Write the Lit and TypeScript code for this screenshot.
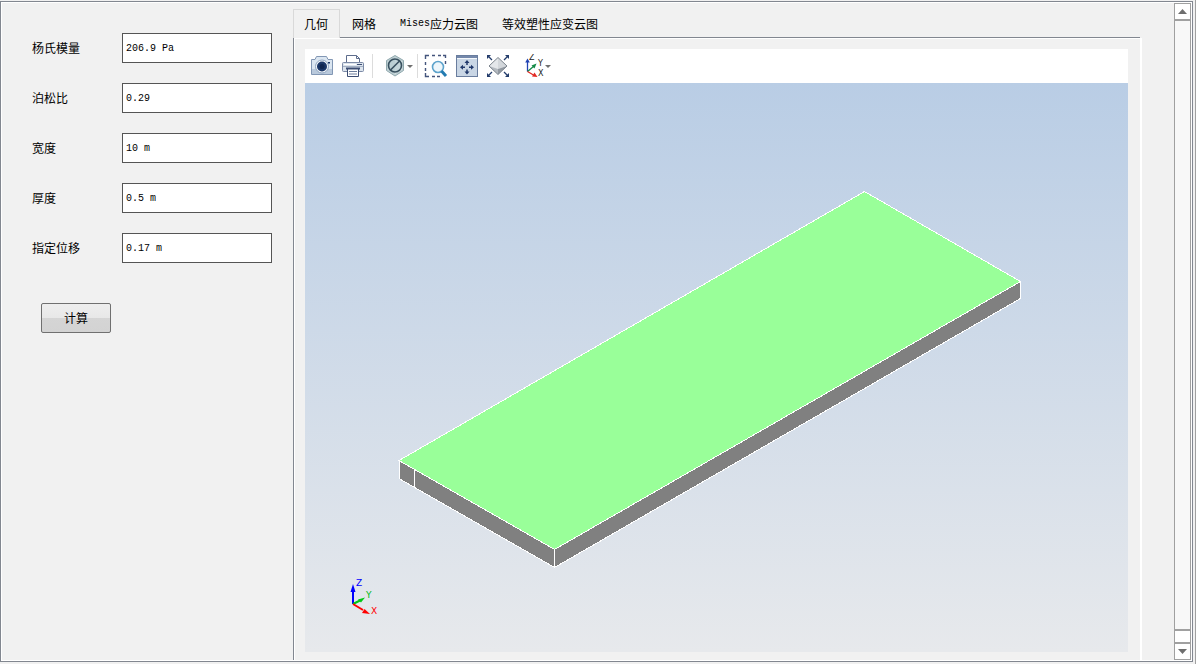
import { LitElement, html, css, svg } from "lit";
import { customElement, state } from "lit/decorators.js";

const FIELDS = [
  { id: "young", label: "杨氏模量", value: "206.9 Pa" },
  { id: "poisson", label: "泊松比", value: "0.29" },
  { id: "width", label: "宽度", value: "10 m" },
  { id: "thickness", label: "厚度", value: "0.5 m" },
  { id: "displacement", label: "指定位移", value: "0.17 m" },
];

const TABS = [
  { latin: "", text: "几何" },
  { latin: "", text: "网格" },
  { latin: "Mises", text: "应力云图" },
  { latin: "", text: "等效塑性应变云图" },
];

const camera = svg`
  <path d="M1.500 5.500h3.500l1.500-3h10l1.500 3h4.500v15h-21z" fill="#dbe6f1" stroke="#8297b4"/>
  <path d="M2 15h20v5H2z" fill="#b9c9dc"/>
  <circle cx="12" cy="12.500" r="6.500" fill="#f3f7fb" stroke="#8fa5c0"/>
  <circle cx="12" cy="12.500" r="5" fill="#1b3768"/>
  <circle cx="12" cy="12.500" r="2.500" fill="#102650"/>
  <path d="M18 8h2v1.500h-2z" fill="#1b3768"/>`;
const printer = svg`
  <path d="M5.500 10V1.500h10l3 3V10" fill="#fff" stroke="#5d6c8c"/>
  <path d="M15.500 1.500v3h3" fill="none" stroke="#5d6c8c"/>
  <rect x="1.500" y="8.500" width="21" height="9" rx="1" fill="#dce4ed" stroke="#7c8aa6"/>
  <path d="M2 12.500h20" stroke="#a3b0c4"/>
  <path d="M3 10.500h12" stroke="#fff"/>
  <path d="M16 10.500h5" stroke="#3b4c72"/>
  <path d="M6.500 14.500h11v8h-11z" fill="#fff" stroke="#3b4c72"/>
  <path d="M5 14.500h14" stroke="#3b4c72" stroke-width="2"/>
  <path d="M8 17.500h8M8 20h8" stroke="#6e7f9e"/>`;
const noClip = svg`
  <path d="M12 1.500l8.500 5v10L12 22l-8.500-5.500v-10z" fill="#bfd0d4" stroke="#90a9ae"/>
  <path d="M12 3.500l7 4v8L12 20z" fill="#d9e4e6"/>
  <circle cx="12" cy="11.500" r="6.500" fill="#b9cfd3" fill-opacity="0.700" stroke="#38505f" stroke-width="1.600"/>
  <path d="M7.500 16l9-9" stroke="#38505f" stroke-width="1.600"/>`;
const zoomBox = svg`
  <path d="M1.500 5V1.500H5M8 1.500h3M14 1.500h3M19 1.500h2.500V4M1.500 8v3M1.500 14v3M1.500 19v3.500H5M8 22.500h3M13 22.500h3M21.500 7v3" fill="none" stroke="#43547c" stroke-width="1.400"/>
  <circle cx="14" cy="13" r="5.500" fill="#edf6fb" stroke="#5da3cc" stroke-width="1.600"/>
  <path d="M17.500 17l4.500 5" stroke="#237bb1" stroke-width="3"/>`;
const extents = svg`
  <rect x="1.500" y="1.500" width="21" height="21" fill="#c9d6e5" stroke="#697d9e"/>
  <path d="M2 2h20v2H2z" fill="#7488ab"/>
  <path d="M2 4.500h20" stroke="#f3f7fb"/>
  <path d="M12 6l2.500 3h-5zM12 20.500l2.500-3h-5zM5 13.200l3-2.500v5zM19 13.200l-3-2.500v5z" fill="#20386b"/>
  <path d="M12 8v3M12 15.500V18M7 13.200h3M14 13.200h3" stroke="#20386b" stroke-width="1.500"/>`;
const fitView = svg`
  <path d="M12 3.500L21 12l-9 8.500L3 12z" fill="#e4e7ea"/>
  <path d="M12 3.500L21 12l-9 3z" fill="#d3d7db"/>
  <path d="M21 12l-9 8.500V15z" fill="#9299a1"/>
  <path d="M3 12l9 8.500V15z" fill="#b4bac0"/>
  <path d="M12 3.500L21 12l-9 8.500L3 12z" fill="none" stroke="#7d858e"/>
  <path d="M1 1h4L1 5zM23 1h-4l4 4zM1 23h4l-4-4zM23 23h-4l4-4z" fill="#233c6b"/>
  <path d="M2 2l4 4M22 2l-4 4M2 22l4-4M22 22l-4-4" stroke="#233c6b" stroke-width="1.300"/>`;
const axes = svg`
  <path d="M3.500 17.500V7" stroke="#2143b3" stroke-width="1.300"/>
  <path d="M3.500 4.500l2.300 4H1.200z" fill="#2143b3"/>
  <path d="M3.500 17.500l6-5" stroke="#148a45" stroke-width="1.300"/>
  <path d="M12.500 9.500l-2 5-3-3z" fill="#148a45"/>
  <path d="M3.500 17.500l6 3.500" stroke="#e32822" stroke-width="1.300"/>
  <path d="M13.500 23l-5.500-.5 2.500-4z" fill="#e32822"/>
  <text x="5" y="6" class="axis">Z</text>
  <text x="14" y="12" class="axis">Y</text>
  <text x="14" y="22" class="axis">X</text>`;

@customElement("app-root")
export class AppRoot extends LitElement {
  @state() private active = 0;

  static styles = css`
    :host {
      display: block;
      box-sizing: border-box;
      height: 100vh;
      padding: 1px 1px 2px 0;
      border-right: 1px solid #a0a0a0;
      background: #f1f1f1;
      color: #000;
      font: 12px/16px "Noto Sans CJK SC", sans-serif;
    }
    * {
      box-sizing: border-box;
    }
    .frame {
      display: flex;
      height: 100%;
      margin-right: 1px;
      border: 1px solid #828790;
      outline: 1px solid #fff;
      outline-offset: -2px;
      padding: 1px;
      background: #f1f1f1;
    }
    .form {
      flex: none;
      width: 291px;
      padding: 30px 20px 0 30px;
    }
    .row {
      display: grid;
      grid-template-columns: 90px 150px;
      align-items: center;
      margin-bottom: 20px;
    }
    .row input {
      width: 100%;
      height: 30px;
      padding: 0 3px;
      border: 1px solid #555;
      border-radius: 0;
      background: #fff;
      color: #000;
      font: 10px/16px "Liberation Mono", monospace;
      outline: none;
    }
    .calc {
      width: 70px;
      height: 30px;
      margin: 20px 0 0 9px;
      padding: 0;
      border: 1px solid #707070;
      border-radius: 2px;
      background: linear-gradient(#eee 0, #e8e8e8 50%, #d5d5d5 50%, #d3d3d3 100%);
      color: #000;
      font: inherit;
    }
    .results {
      display: flex;
      flex: 1;
      flex-direction: column;
      min-width: 0;
      padding: 6px 32px 0 0;
    }
    .tabs {
      display: flex;
      gap: 1px;
      height: 29px;
      margin-right: 2px;
      box-shadow: inset 0 -1px #828790;
    }
    .tab {
      display: flex;
      align-items: center;
      padding: 0 11px 1px 10px;
      border: 1px solid transparent;
      border-bottom: 0;
      background: none;
      color: #000;
      font: inherit;
      white-space: nowrap;
    }
    .tab.on {
      border-color: #d9d9d9;
      background: #f1f1f1;
    }
    .latin {
      font: 10px/16px "Liberation Mono", monospace;
    }
    .pane {
      display: flex;
      flex: 1;
      flex-direction: column;
      min-height: 0;
      padding: 11px 12px 8px 11px;
      border-left: 1px solid #828790;
      border-right: 2px solid #fff;
      box-shadow: inset 1px 1px #fff;
    }
    .tools {
      display: flex;
      flex: none;
      align-items: center;
      height: 34px;
      padding-left: 5px;
      gap: 7px;
      background: #fff;
    }
    .tool {
      display: flex;
      align-items: center;
      flex: none;
      padding: 0;
      border: 0;
      background: none;
    }
    .tool svg {
      display: block;
    }
    .sep {
      width: 1px;
      height: 24px;
      background: #dcdcdc;
    }
    .sep.wide {
      margin-right: 3px;
    }
    .sep.narrow {
      margin: 0 -1px 0 -3px;
    }
    .caret {
      border: 3px solid transparent;
      border-top-color: #707070;
      border-bottom: 0;
    }
    .gap {
      margin-left: 7px;
    }
    .axis {
      font: 8px "DejaVu Sans", sans-serif;
      fill: #222;
    }
    .view {
      flex: 1;
      min-height: 0;
      background: linear-gradient(#b9cde5, #e7e9ec);
    }
    .view svg {
      display: block;
      width: 100%;
      height: 100%;
    }
    .triad {
      font: 9px "DejaVu Sans", sans-serif;
    }
    .scroll {
      display: flex;
      flex: none;
      flex-direction: column;
      width: 17px;
      border: 1px solid #a0a0a0;
      background: #f8f8f8;
    }
    .arrow {
      display: grid;
      place-items: center;
      flex: none;
      height: 15px;
      padding: 0;
      border: 0;
      background: #fff;
    }
    .arrow.up {
      height: 17px;
      border-bottom: 2px solid #a0a0a0;
    }
    .track {
      flex: 1;
    }
    .thumb {
      height: 15px;
      border: 2px solid #a0a0a0;
      border-width: 2px 0;
      background: #fff;
    }
  `;

  private icon(art: unknown, title: string, width = 24) {
    return html`<svg width=${width} height="24" viewBox="0 0 ${width} 24" role="img" aria-label=${title}>${art}</svg>`;
  }

  private tool(art: unknown, title: string) {
    return html`<button class="tool" aria-label=${title}>${this.icon(art, title)}</button>`;
  }

  private geometry() {
    return html`<svg viewBox="0 0 823 569" role="img" aria-label="几何">
      <g shape-rendering="crispEdges" stroke="#fff" stroke-width="1" stroke-linejoin="round">
        <path d="M94 377.500L249.500 466.500V484.500L94 395.500Z" fill="#808080" />
        <path d="M249.500 466.500L715.500 198.500V215.500L249.500 484.500Z" fill="#808080" />
        <path d="M94 377.500L559.500 108.500L715.500 198.500L249.500 466.500Z" fill="#99ff99" />
        <path d="M109.500 386V404" />
      </g>
      <g stroke-width="2" fill="none">
        <path d="M48 521V505" stroke="#00f" />
        <path d="M48 521l8-4" stroke="#00c814" />
        <path d="M48 521l10 6" stroke="#f00" />
      </g>
      <path d="M48 501l2.500 8h-5z" fill="#00f" />
      <path d="M60 514.500l-4 5-3-3z" fill="#00c814" />
      <path d="M65 531l-8-1 2.500-4z" fill="#f00" />
      <g class="triad">
        <text x="51" y="503" fill="#00f">Z</text>
        <text x="61" y="515" fill="#00b814">Y</text>
        <text x="66" y="531" fill="#f00">X</text>
      </g>
    </svg>`;
  }

  render() {
    return html`
      <div class="frame">
        <form class="form" @submit=${(e: Event) => e.preventDefault()}>
          ${FIELDS.map(
            (f) => html`<div class="row">
              <label for=${f.id}>${f.label}</label>
              <input id=${f.id} type="text" .value=${f.value} />
            </div>`,
          )}
          <button class="calc" type="submit">计算</button>
        </form>
        <main class="results">
          <div class="tabs" role="tablist">
            ${TABS.map(
              (t, i) => html`<button
                class="tab ${i === this.active ? "on" : ""}"
                role="tab"
                aria-selected=${i === this.active}
                @click=${() => (this.active = i)}
              >${t.latin ? html`<span class="latin">${t.latin}</span>` : ""}${t.text}</button>`,
            )}
          </div>
          <section class="pane" role="tabpanel">
            <div class="tools" role="toolbar">
              ${this.tool(camera, "图像快照")} ${this.tool(printer, "打印")}
              <span class="sep wide"></span>
              <button class="tool" aria-label="裁剪">${this.icon(noClip, "裁剪")}<span class="caret"></span></button>
              <span class="sep narrow"></span>
              ${this.tool(zoomBox, "缩放框")} ${this.tool(extents, "缩放到窗口大小")}
              ${this.tool(fitView, "转到默认视图")}
              <button class="tool gap" aria-label="视图方向">${this.icon(axes, "视图方向", 21)}<span class="caret"></span></button>
            </div>
            <div class="view">${this.geometry()}</div>
          </section>
        </main>
        <div class="scroll">
          <button class="arrow up" aria-label="向上滚动">
            <svg width="9" height="5" viewBox="0 0 9 5"><path d="M4.500 0L9 5H0z" fill="#6e6e6e" /></svg>
          </button>
          <div class="track"></div>
          <div class="thumb"></div>
          <button class="arrow" aria-label="向下滚动">
            <svg width="9" height="5" viewBox="0 0 9 5"><path d="M4.500 5L9 0H0z" fill="#6e6e6e" /></svg>
          </button>
        </div>
      </div>
    `;
  }
}
